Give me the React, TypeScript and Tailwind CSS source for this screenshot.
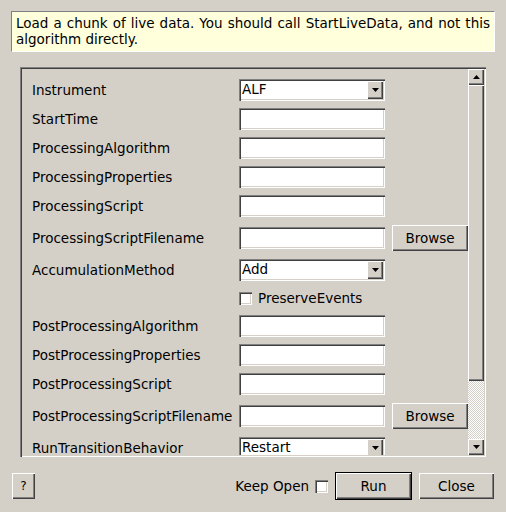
import React from "react";

const raised =
  "shadow-[inset_1px_1px_0_#ffffff,inset_-1px_-1px_0_#404040,inset_-2px_-2px_0_#808080]";
const sunken =
  "shadow-[inset_1px_1px_0_#808080,inset_2px_2px_0_#404040,inset_-1px_-1px_0_#ffffff,inset_-2px_-2px_0_#d4d0c8]";

type Row = {
  label: string;
  kind: "combo" | "input" | "browse" | "check";
  value?: string;
};

const rows: Row[] = [
  { label: "Instrument", kind: "combo", value: "ALF" },
  { label: "StartTime", kind: "input" },
  { label: "ProcessingAlgorithm", kind: "input" },
  { label: "ProcessingProperties", kind: "input" },
  { label: "ProcessingScript", kind: "input" },
  { label: "ProcessingScriptFilename", kind: "browse" },
  { label: "AccumulationMethod", kind: "combo", value: "Add" },
  { label: "PreserveEvents", kind: "check" },
  { label: "PostProcessingAlgorithm", kind: "input" },
  { label: "PostProcessingProperties", kind: "input" },
  { label: "PostProcessingScript", kind: "input" },
  { label: "PostProcessingScriptFilename", kind: "browse" },
  { label: "RunTransitionBehavior", kind: "combo", value: "Restart" },
];

function Arrow({ up }: { up?: boolean }) {
  return (
    <svg width="7" height="4" viewBox="0 0 7 4">
      {up ? <polygon points="3.5,0 7,4 0,4" fill="#000" /> : <polygon points="0,0 7,0 3.5,4" fill="#000" />}
    </svg>
  );
}

function TextBox() {
  return <div className={`w-[146px] h-[22px] bg-white ${sunken}`} />;
}

function Combo({ value }: { value: string }) {
  return (
    <div className={`w-[146px] h-[22px] bg-white flex items-center p-[2px] ${sunken}`}>
      <span className="flex-1 pl-[1px] leading-none">{value}</span>
      <div className={`w-[16px] h-[18px] bg-[#d4d0c8] flex items-center justify-center ${raised}`}>
        <Arrow />
      </div>
    </div>
  );
}

function Button({ children, className = "" }: { children: React.ReactNode; className?: string }) {
  return (
    <div className={`bg-[#d4d0c8] flex items-center justify-center ${raised} ${className}`}>
      {children}
    </div>
  );
}

function Check() {
  return <div className={`w-[13px] h-[13px] bg-white ${sunken}`} />;
}

export default function App() {
  return (
    <div className="w-[506px] h-[512px] bg-[#d4d0c8] flex flex-col pt-[11px] font-['DejaVu_Sans',sans-serif] text-[13.5px] text-black overflow-hidden">
      <div className="mx-[11px] h-[41px] bg-[#ffffdc] border-t border-l border-[#808080] border-r-white border-b-white border-r border-b px-[4px] pt-[3px] leading-[16px] text-justify">
        Load a chunk of live data. You should call StartLiveData, and not this algorithm directly.
      </div>

      <div className={`mx-[20px] mt-[15px] h-[390px] p-[2px] flex ${sunken}`}>
        <div className="flex-1 overflow-hidden pl-[10px] pt-[6.5px]">
          {rows.map((r) => (
            <div
              key={r.label}
              className={`flex items-center ${
                r.kind === "browse" ? "h-[35px]" : r.kind === "check" ? "h-[27px]" : "h-[29px]"
              }`}
            >
              {r.kind === "check" ? (
                <div className="flex items-center ml-[207px] gap-[6px]">
                  <Check />
                  <span>{r.label}</span>
                </div>
              ) : (
                <>
                  <span className="w-[207px] shrink-0 whitespace-nowrap">{r.label}</span>
                  {r.kind === "combo" ? <Combo value={r.value ?? ""} /> : <TextBox />}
                  {r.kind === "browse" && (
                    <Button className="ml-[7px] w-[76px] h-[26px]">Browse</Button>
                  )}
                </>
              )}
            </div>
          ))}
        </div>

        <div className="w-[16px] flex flex-col">
          <Button className="h-[16px]">
            <Arrow up />
          </Button>
          <div className={`h-[296px] bg-[#d4d0c8] ${raised}`} />
          <div className="flex-1 bg-[repeating-conic-gradient(#d4d0c8_0%_25%,#ffffff_0%_50%)] bg-[length:2px_2px]" />
          <Button className="h-[16px]">
            <Arrow />
          </Button>
        </div>
      </div>

      <div className="mt-[15px] flex items-center px-[12px] h-[28px]">
        <Button className="w-[23px] h-[26px] text-[12px]">?</Button>
        <div className="flex-1" />
        <span>Keep Open</span>
        <div className="ml-[6px]">
          <Check />
        </div>
        <div className="ml-[7px] w-[77px] h-[28px] border border-black">
          <Button className="w-full h-full">Run</Button>
        </div>
        <Button className="ml-[7px] w-[75px] h-[26px]">Close</Button>
      </div>
    </div>
  );
}
